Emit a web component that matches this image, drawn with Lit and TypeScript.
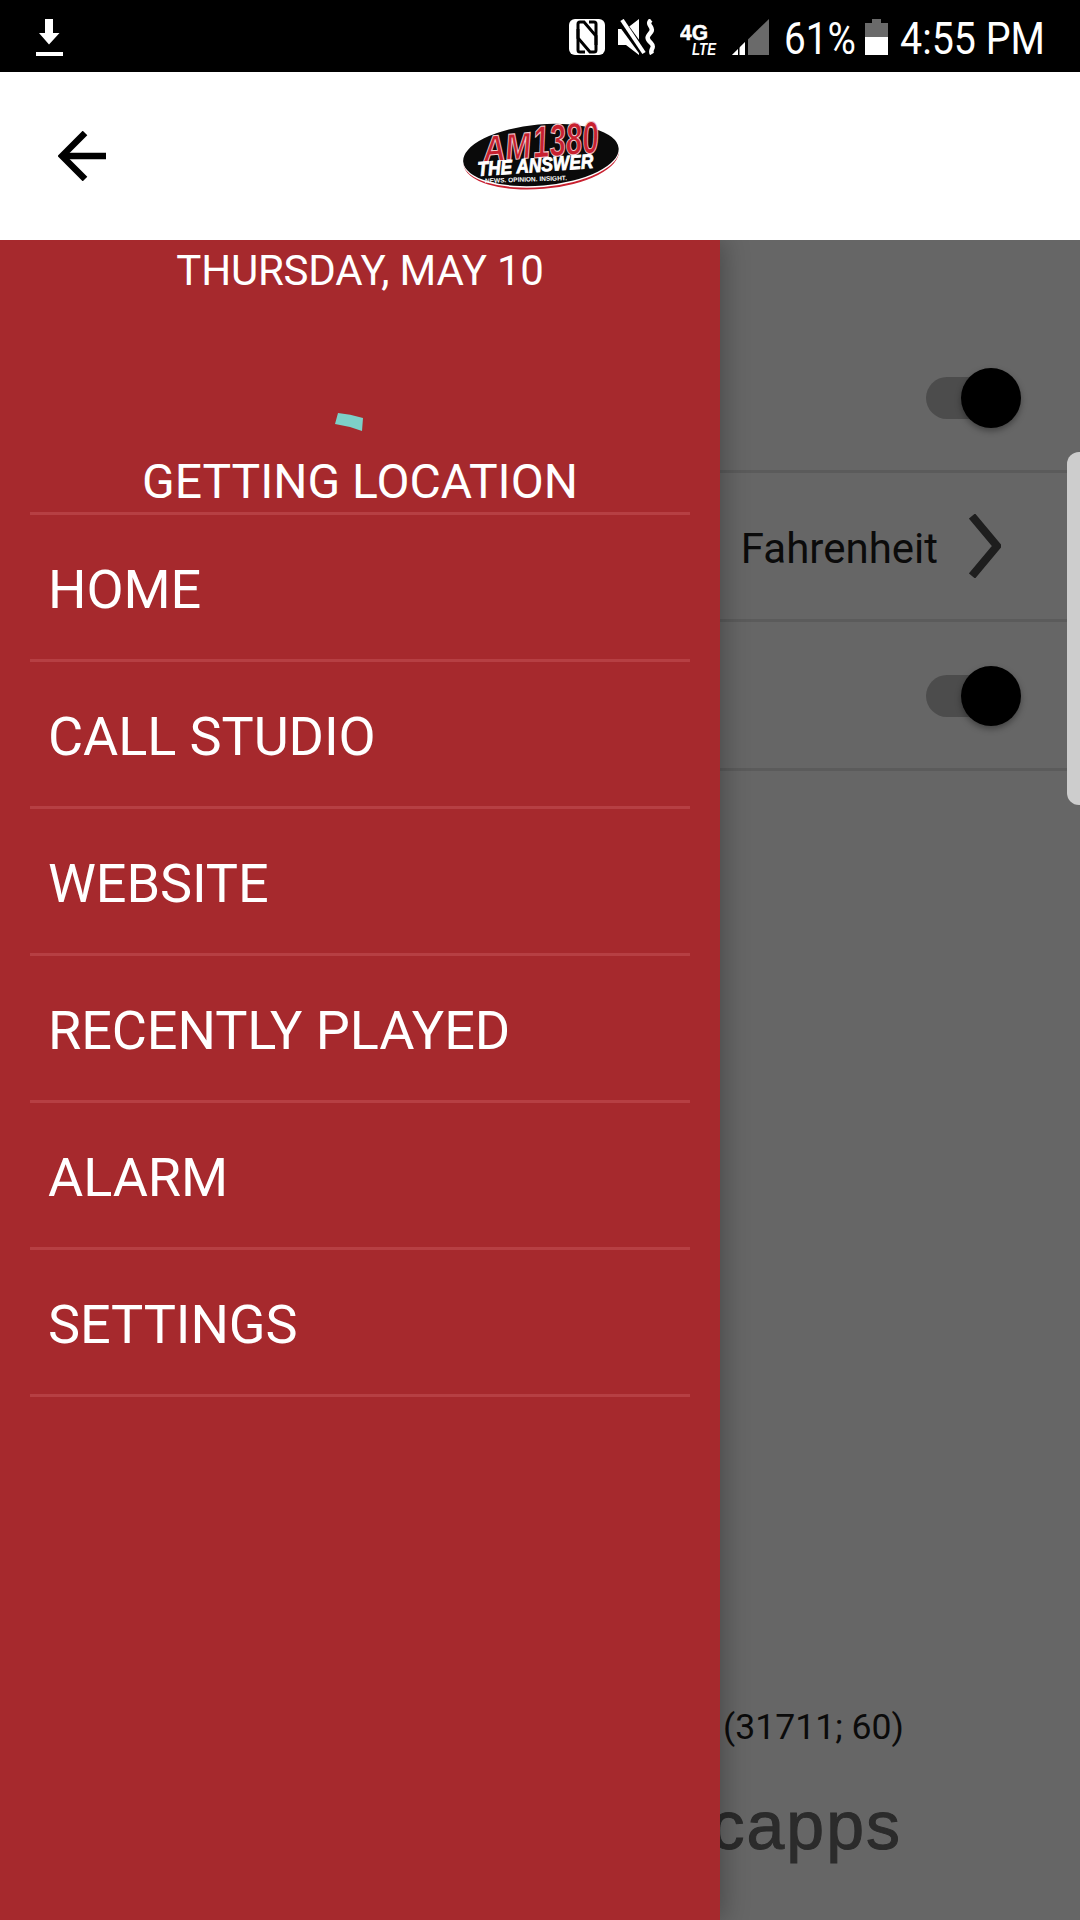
import { LitElement, html, css, svg } from "lit";
import { customElement } from "lit/decorators.js";

const MENU = ["HOME", "CALL STUDIO", "WEBSITE", "RECENTLY PLAYED", "ALARM", "SETTINGS"];

@customElement("app-root")
export class AppRoot extends LitElement {
  static styles = css`
    :host {
      display: block;
      width: 1080px;
      height: 1920px;
      overflow: hidden;
      font-family: Roboto, "Liberation Sans", sans-serif;
      background: #666;
    }
    .status {
      height: 72px;
      background: #000;
      color: #fff;
      display: flex;
      align-items: flex-start;
      position: relative;
    }
    .dl { margin: 19px 0 0 35px; }
    .status-right {
      margin-left: auto;
      display: flex;
      align-items: flex-start;
      padding-right: 35px;
    }
    .status-right svg { display: block; margin-top: 19px; flex: none; }
    .status-right svg.i-net { margin-left: 24px; margin-top: 17px; }
    .i-mute { margin-left: 13px; }
    .i-sig { margin-left: 7px; }
    .i-bat { margin-left: 11px; }
    .st-text {
      font-size: 45px;
      font-weight: 400;
      line-height: 78px;
      height: 72px;
      white-space: nowrap;
    }
    .pct { margin-left: 15px; width: 70px; }
    .pct span, .time span { display: inline-block; transform-origin: left center; }
    .pct span { transform: scaleX(0.86); }
    .time { margin-left: 12px; width: 145px; }
    .time span { transform: scaleX(0.875); }
    .appbar {
      height: 168px;
      background: #fff;
      display: flex;
      align-items: center;
    }
    .back { margin-left: 58px; margin-top: 0; display: block; }
    .logo { margin-left: 355px; display: block; }
    .body {
      position: relative;
      height: 1680px;
      overflow: hidden;
      background: #666;
      color: #0b0b0b;
    }
    .settings { padding: 83.5px 0 0 720px; }
    .row {
      height: 149px;
      box-sizing: border-box;
      border-bottom: 3px solid #5b5b5b;
      display: flex;
      align-items: center;
      justify-content: flex-end;
    }
    .row-unit { padding-right: 79px; font-size: 42px; }
    .row-unit span { padding-top: 5px; }
    .row-unit svg { margin-left: 31px; display: block; }
    .toggle {
      position: relative;
      width: 74px;
      height: 42px;
      margin-right: 80px;
      margin-top: 3px;
      background: #4c4c4c;
      border-radius: 21px 0 0 21px;
    }
    .knob {
      position: absolute;
      right: -21px;
      top: -9px;
      width: 60px;
      height: 60px;
      border-radius: 50%;
      background: #000;
      box-shadow: 0 3px 6px rgba(0, 0, 0, 0.35);
    }
    .scroll {
      position: absolute;
      right: 0;
      top: 212px;
      width: 13px;
      height: 353px;
      background: #cdcdcd;
      border-radius: 12px 0 0 12px;
    }
    .build {
      position: absolute;
      left: 723px;
      top: 1463px;
      font-size: 35.6px;
      line-height: 48px;
      white-space: nowrap;
    }
    .brand {
      position: absolute;
      right: 178px;
      top: 1545px;
      font-family: "Liberation Sans", sans-serif;
      font-size: 68px;
      letter-spacing: 2px;
      line-height: 80px;
      color: #2b2b2b;
      -webkit-text-stroke: 1px #2b2b2b;
      white-space: nowrap;
    }
    .drawer {
      position: absolute;
      left: 0;
      top: 0;
      width: 720px;
      height: 1680px;
      background: #a6292d;
      color: #fff;
      box-shadow: 4px 0 24px rgba(0, 0, 0, 0.28);
      display: flex;
      flex-direction: column;
    }
    .date {
      text-align: center;
      font-size: 42px;
      letter-spacing: -0.2px;
      line-height: 50px;
      margin-top: 6px;
    }
    .spin { display: block; margin: 117px 0 0 334px; }
    .loc {
      text-align: center;
      font-size: 48px;
      line-height: 56px;
      margin-top: 21px;
    }
    .menu { margin: 1.5px 30px 0; border-top: 3px solid #b63f43; }
    .item {
      height: 147px;
      box-sizing: border-box;
      border-bottom: 3px solid #b63f43;
      padding: 5px 0 0 18px;
      font-size: 54px;
      letter-spacing: -0.08px;
      display: flex;
      align-items: center;
    }
  `;

  private logo() {
    return svg`
      <svg class="logo" width="190" height="92" viewBox="0 -10 190 92">
        <g transform="rotate(-5 80 36)">
          <ellipse cx="80" cy="37.5" rx="78" ry="31.5" fill="#c8202f"/>
          <ellipse cx="80" cy="36" rx="78.5" ry="31" fill="#fff"/>
          <ellipse cx="80" cy="35" rx="78" ry="30.5" fill="#0a0a0a"/>
        </g>
        <g font-family="'Liberation Sans', sans-serif" font-style="italic" font-weight="700">
          <g fill="#c8202f" stroke="#f0ccd0" stroke-width="1">
            <text x="23" y="42" font-size="37" textLength="48" lengthAdjust="spacingAndGlyphs" transform="rotate(-5 23 42)">AM</text>
            <text x="73" y="38" font-size="45" textLength="66" lengthAdjust="spacingAndGlyphs" transform="rotate(-5 73 38)">1380</text>
          </g>
          <text x="17" y="56" font-size="20" fill="#fff" stroke="#fff" stroke-width="0.9" textLength="116" lengthAdjust="spacingAndGlyphs" transform="rotate(-4 17 56)">THE ANSWER</text>
          <text x="24" y="63" font-size="6.5" font-style="normal" fill="#fff" textLength="82" lengthAdjust="spacingAndGlyphs" transform="rotate(-2 24 63)">NEWS. OPINION. INSIGHT.</text>
        </g>
      </svg>`;
  }

  private toggle() {
    return html`<div class="toggle"><div class="knob"></div></div>`;
  }

  render() {
    return html`
      <div class="status">
        <svg class="dl" width="29" height="37" viewBox="0 0 29 37" fill="#fff">
          <path d="M10 0h8v14h6.5L14 25.5 4 14h6z" />
          <rect x="1" y="33" width="27" height="4" />
        </svg>
        <div class="status-right">
          <svg width="36" height="36" viewBox="0 0 36 36">
            <rect width="36" height="36" rx="6" fill="#fff" />
            <g fill="none" stroke="#000" stroke-width="3">
              <path d="M16 33H11q-2 0-2-2V5q0-2 2-2h4l12 14v9" />
              <path d="M20 3h5q2 0 2 2v26q0 2-2 2h-4L9 19v-9" />
            </g>
          </svg>
          <svg class="i-mute" width="38" height="36" viewBox="0 0 38 36" fill="#fff">
            <path d="M0 10h8L21 0v36L8 26H0z" />
            <path d="M1 0l24 33" stroke="#000" stroke-width="8" />
            <path d="M4 1l22 33" stroke="#fff" stroke-width="4" />
            <path d="M33 1c-6 5 4 7 0 12s-5 6 0 11-2 6 1 11" fill="none" stroke="#fff" stroke-width="4.5" />
          </svg>
          <svg class="i-net" width="45" height="42" viewBox="0 -2 45 42">
            <text x="0" y="21" font-family="'Liberation Sans', sans-serif" font-weight="700" font-size="22" fill="#fff" stroke="#fff" stroke-width="0.5" textLength="28" lengthAdjust="spacingAndGlyphs">4G</text>
            <text x="12" y="36" font-family="'Liberation Sans', sans-serif" font-weight="700" font-style="italic" font-size="16" fill="#fff" textLength="24" lengthAdjust="spacingAndGlyphs">LTE</text>
          </svg>
          <svg class="i-sig" width="37" height="36" viewBox="0 0 37 36">
            <path d="M37 0v36H0z" fill="#6a6a6a" />
            <path d="M0 36l13-13v13z" fill="#fff" />
            <rect x="13" y="20" width="3" height="16" fill="#000" />
            <rect x="6" y="28" width="1.5" height="8" fill="#000" />
          </svg>
          <div class="st-text pct"><span>61%</span></div>
          <svg class="i-bat" width="23" height="36" viewBox="0 0 23 36">
            <path d="M0 4h7V0h9v4h7v14H0z" fill="#6a6a6a" />
            <rect y="18" width="23" height="18" fill="#fff" />
          </svg>
          <div class="st-text time"><span>4:55 PM</span></div>
        </div>
      </div>
      <div class="appbar">
        <svg class="back" width="48" height="50" viewBox="0 0 48 50" fill="none" stroke="#000" stroke-width="6.5">
          <path d="M48 25H4" />
          <path d="M27 2 4 25l23 23" />
        </svg>
        ${this.logo()}
      </div>
      <div class="body">
        <div class="settings">
          <div class="row">${this.toggle()}</div>
          <div class="row row-unit">
            <span>Fahrenheit</span>
            <svg width="32" height="64" viewBox="0 0 32 64" fill="none" stroke="#1e1e1e" stroke-width="8">
              <path d="M3 2l25 30L3 62" />
            </svg>
          </div>
          <div class="row">${this.toggle()}</div>
        </div>
        <div class="scroll"></div>
        <div class="build">(31711; 60)</div>
        <div class="brand">capps</div>
        <div class="drawer">
          <div class="date">THURSDAY, MAY 10</div>
          <svg class="spin" width="30" height="20" viewBox="0 0 30 20">
            <path d="M4 0Q16 1 29 5L28 18Q15 13 1 11z" fill="#7dd0c8" />
          </svg>
          <div class="loc">GETTING LOCATION</div>
          <div class="menu">
            ${MENU.map((m) => html`<div class="item">${m}</div>`)}
          </div>
        </div>
      </div>
    `;
  }
}
